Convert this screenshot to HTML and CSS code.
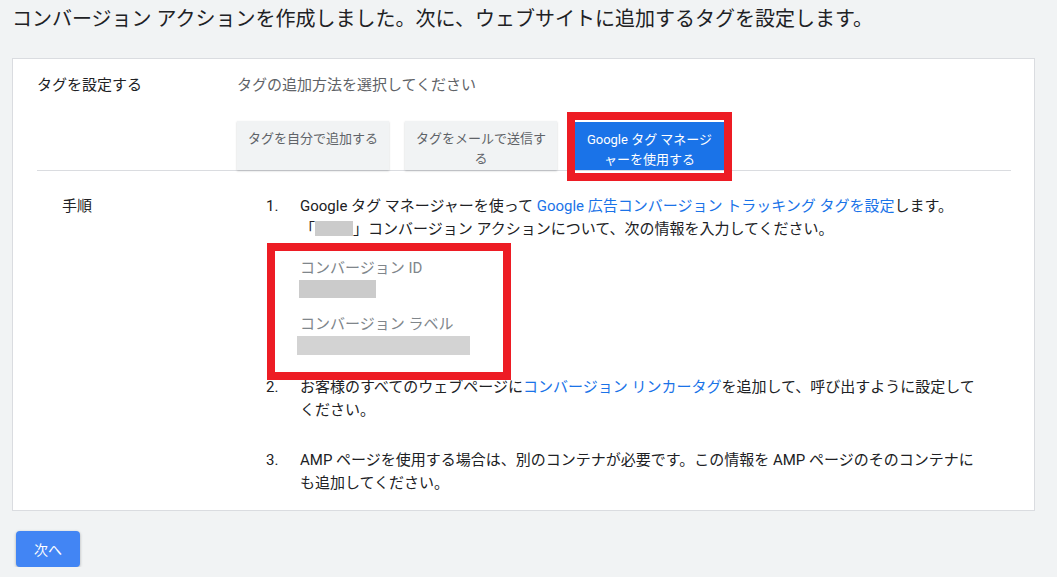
FILE: index.html
```html
<!DOCTYPE html>
<html lang="ja">
<head>
  <meta charset="UTF-8">
  <meta name="viewport" content="width=device-width, initial-scale=1.0">
  <title>タグを設定する</title>
  <link rel="stylesheet" href="styles.css">
</head>
<body>
  <h1 class="page-title">コンバージョン アクションを作成しました。次に、ウェブサイトに追加するタグを設定します。</h1>

  <div class="card">
    <div class="setup">
      <div class="setup-label">タグを設定する</div>
      <div class="setup-hint">タグの追加方法を選択してください</div>
      <div class="tabs">
        <div class="tab">タグを自分で追加する</div>
        <div class="tab">タグをメールで送信する</div>
        <div class="tab tab-active marked">Google タグ マネージャーを使用する</div>
      </div>
    </div>

    <div class="steps">
      <div class="steps-label">手順</div>
      <ol class="step-list">
        <li class="step">
          <span class="step-num">1.</span>
          <div class="step-text">
            <div>Google タグ マネージャーを使って <a href="#">Google 広告コンバージョン トラッキング タグを設定</a>します。</div>
            <div>「<span class="redacted redacted-name"></span>」コンバージョン アクションについて、次の情報を入力してください。</div>
            <div class="details">
              <div class="detail-label">コンバージョン ID</div>
              <div class="redacted redacted-id"></div>
              <div class="detail-label detail-label-2">コンバージョン ラベル</div>
              <div class="redacted redacted-label"></div>
            </div>
          </div>
        </li>
        <li class="step">
          <span class="step-num">2.</span>
          <div class="step-text">お客様のすべてのウェブページに<a href="#">コンバージョン リンカータグ</a>を追加して、呼び出すように設定してください。</div>
        </li>
        <li class="step">
          <span class="step-num">3.</span>
          <div class="step-text">AMP ページを使用する場合は、別のコンテナが必要です。この情報を AMP ページのそのコンテナにも追加してください。</div>
        </li>
      </ol>
    </div>
  </div>

  <button type="button" class="next-button">次へ</button>
</body>
</html>
```

FILE: styles.css
```css
body {
  font-family: Roboto, "Noto Sans CJK JP", sans-serif;
  background-color: #f1f3f4; /* Page Gray */
  margin: 0;
  padding: 0 22px 0 12px;
  color: #202124;
  font-size: 15px;
  line-height: 23px;
}

.page-title {
  font-size: 20px;
  font-weight: 400;
  line-height: 28px;
  margin: 5px 0 25px;
}

.card {
  background-color: #fff;
  border: 1px solid #dadce0;
}

.setup {
  display: grid;
  grid-template-columns: 200px 1fr;
  margin: 0 23px 0 24px;
  padding-top: 15px;
  border-bottom: 1px solid #dadce0;
}

.setup-hint {
  color: #5f6368;
}

.tabs {
  grid-column: 2;
  display: flex;
  gap: 16px;
  margin-top: 24px;
}

.tab {
  width: 152px;
  height: 49px;
  box-sizing: border-box;
  padding: 8px 11px 0;
  background-color: #f1f3f4;
  color: #5f6368;
  font-size: 13px;
  line-height: 20px;
  text-align: center;
  box-shadow: 0 1px 2px rgba(60, 64, 67, 0.25);
}

.tab-active {
  width: 149px;
  margin-left: 2px;
  background-color: #1a73e8; /* Google Blue */
  color: #fff;
  box-shadow: none;
  border-top: 1px solid #fff;
}

/* red annotation boxes drawn over the screenshot */
.marked {
  position: relative;
}

.marked::after {
  content: "";
  position: absolute;
  top: -10px;
  left: -8px;
  right: -8px;
  bottom: -11px;
  border: 8px solid #ed1c24;
}

.steps {
  display: grid;
  grid-template-columns: 204px 1fr;
  padding: 24px 0 15px 49px;
}

.step-list {
  list-style: none;
  margin: 0;
  padding: 0;
}

.step {
  display: flex;
  margin-bottom: 27px;
}

.step:last-child {
  margin-bottom: 0;
}

.step-num {
  width: 34px;
  flex: none;
}

.step-text {
  width: 678px;
}

.step-text a {
  color: #1a73e8;
  text-decoration: none;
}

.redacted {
  background-color: #cbcbcb;
}

.redacted-name {
  display: inline-block;
  width: 38px;
  height: 15px;
  vertical-align: -2px;
}

.details {
  position: relative;
  padding-top: 16px;
  margin-bottom: -6px;
}

.details::after {
  content: "";
  position: absolute;
  top: 2px;
  left: -33px;
  width: 228px;
  height: 121px;
  border: 8px solid #ed1c24;
}

.detail-label {
  color: #80868b;
}

.detail-label-2 {
  margin-top: 15px;
}

.redacted-id {
  width: 77px;
  height: 18px;
  margin-left: -1px;
}

.redacted-label {
  width: 173px;
  height: 19px;
  margin-left: -3px;
  background-color: #d3d3d3;
}

.next-button {
  margin: 20px 0 0 4px;
  width: 64px;
  height: 36px;
  border: none;
  border-radius: 4px;
  background-color: #4285f4;
  color: #fff;
  font-family: Roboto, "Noto Sans CJK JP", sans-serif;
  font-size: 14px;
  cursor: pointer;
  box-shadow: 0 1px 3px rgba(60, 64, 67, 0.4);
}
```
